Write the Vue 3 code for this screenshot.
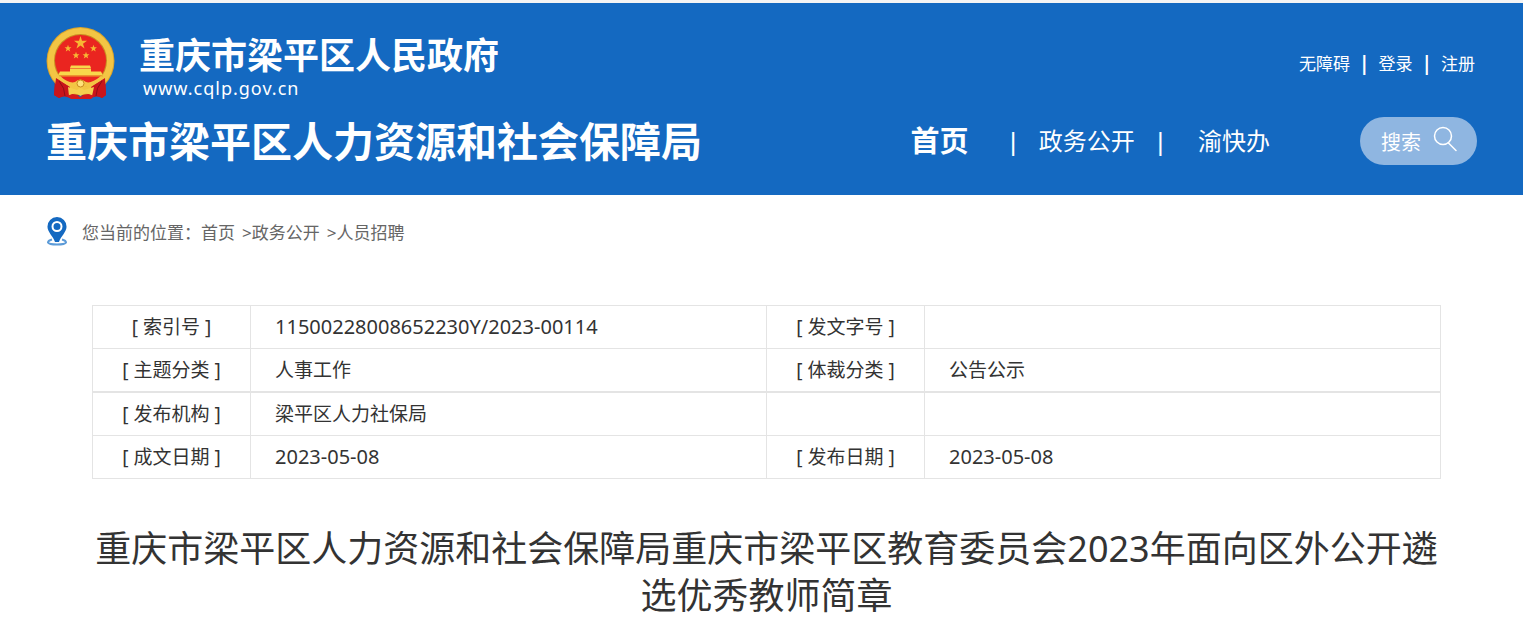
<script setup>
const userLinks = ['无障碍', '登录', '注册']

const crumbs = ['首页', '政务公开', '人员招聘']

const rows = [
  ['[ 索引号 ]', '11500228008652230Y/2023-00114', '[ 发文字号 ]', ''],
  ['[ 主题分类 ]', '人事工作', '[ 体裁分类 ]', '公告公示'],
  ['[ 发布机构 ]', '梁平区人力社保局', '', ''],
  ['[ 成文日期 ]', '2023-05-08', '[ 发布日期 ]', '2023-05-08'],
]

const isCode = (text) => /^\d/.test(text)
</script>

<template>
  <div class="page">
    <header class="header">
      <div class="brand-row">
        <a class="brand" href="#">
          <svg class="emblem" viewBox="7 7 69 73" aria-hidden="true">
            <path d="M16 58 L15 75 L20 78 Q25 75 31 78 L41 75 L52 78 Q58 75 63 78 L67 75 L66 58Z" fill="#c8141a" />
            <circle cx="41.500" cy="41" r="34" fill="#d9a32c" />
            <circle cx="41.500" cy="41" r="33" fill="#f3c544" />
            <circle cx="41.500" cy="40.500" r="26.500" fill="#c98b20" />
            <circle cx="41.500" cy="40.500" r="25.500" fill="#ea2520" />
            <path d="M41.500 16 L43 20.700 L48 20.700 L44 23.700 L45.500 28.400 L41.500 25.500 L37.500 28.400 L39 23.700 L35 20.700 L40 20.700Z" fill="#f7b733" />
            <path id="small-star" d="M29 24.800 l.9 2.500 h2.500 l-2 1.600 .8 2.500 -2.200-1.500 -2.200 1.500 .8-2.500 -2-1.600 h2.500z" fill="#f7b733" />
            <use href="#small-star" x="25.500" />
            <use href="#small-star" x="8" y="7" />
            <use href="#small-star" x="18" y="7" />
            <path d="M32 45.500 h19 l1 2.500 h-21z M31 48.500 h21 v3 h10 l2 4 h-45 l2-4 h10z" fill="#f8d74b" />
            <path d="M20 55.500 h44 v1 h-44z" fill="#e9a52a" />
            <path d="M17 58 Q24 62 31 67 L29 77 Q25 74 20 78 L15 75Z M66 58 Q59 62 52 67 L54 77 Q58 74 63 78 L67 75Z" fill="#c9151b" />
            <path d="M20 61 Q26 68 26 76 M63 61 Q57 68 57 76" fill="none" stroke="#8f0e18" stroke-width="1" />
            <path d="M18 58 Q30 68 38 67 L45 67 Q54 67 65 58 L62 56 Q52 64 47 62 Q41 57 36 62 Q30 64 21 56Z" fill="#f3c544" />
            <circle cx="41.500" cy="63.500" r="3.500" fill="#ffe27a" stroke="#c98b20" stroke-width="1" />
            <path d="M29 67 L38 70 Q41.500 66 45 70 L55 67 L53 76 Q47 71 41.500 76 Q36 71 30 76Z" fill="#f5cf4e" />
            <path d="M28 76 Q35 72 41 77 Q48 72 55 76 L52 79 H32Z" fill="#d3191c" />
          </svg>
          <span class="brand-text">
            <span class="gov-name">重庆市梁平区人民政府</span>
            <span class="gov-url">www.cqlp.gov.cn</span>
          </span>
        </a>
        <div class="user-links">
          <template v-for="(link, i) in userLinks" :key="link">
            <span v-if="i" class="bar">|</span>
            <a href="#">{{ link }}</a>
          </template>
        </div>
      </div>

      <div class="dept-row">
        <h1 class="dept-name">重庆市梁平区人力资源和社会保障局</h1>
        <div class="dept-tools">
          <nav class="nav">
            <a class="home" href="#">首页</a>
            <span class="bar">|</span>
            <a href="#">政务公开</a>
            <span class="bar">|</span>
            <a class="last" href="#">渝快办</a>
          </nav>
          <button class="search" type="button">
            搜索
            <svg viewBox="0 0 24 26" aria-hidden="true">
              <circle cx="10" cy="10" r="8.500" />
              <path d="M15.500 17 L23 24.500" />
            </svg>
          </button>
        </div>
      </div>
    </header>

    <nav class="crumbs">
      <svg class="pin" viewBox="0 0 22 29" aria-hidden="true">
        <path d="M6 22.500 Q2 23.500 2 25.500 Q3 27.500 11 27.500 Q19 27.500 20 25.500 Q20 23.500 16 22.500" fill="none" stroke="#5c9bd8" stroke-width="2" />
        <path d="M11 0 A9.500 9.500 0 0 1 20.500 10 C20.500 15 15 19 13 25 H9 C7 19 1.500 15 1.500 10 A9.500 9.500 0 0 1 11 0Z" fill="#1469c1" />
        <circle cx="11" cy="9.500" r="4.500" fill="none" stroke="#fff" stroke-width="2" />
      </svg>
      <span>您当前的位置：</span>
      <template v-for="(crumb, i) in crumbs" :key="crumb">
        <span v-if="i" class="arrow">&gt;</span>
        <a href="#">{{ crumb }}</a>
      </template>
    </nav>

    <main class="article">
      <table class="meta">
        <tbody>
          <tr v-for="(row, i) in rows" :key="i">
            <template v-for="(cell, j) in row" :key="j">
              <th v-if="j % 2 === 0" scope="row">{{ cell }}</th>
              <td v-else :class="{ code: isCode(cell) }">{{ cell }}</td>
            </template>
          </tr>
        </tbody>
      </table>
      <h2 class="title">重庆市梁平区人力资源和社会保障局重庆市梁平区教育委员会2023年面向区外公开遴选优秀教师简章</h2>
    </main>
  </div>
</template>

<style>
body {
  background: #fff;
}
</style>

<style scoped>
.page {
  border-top: 3px solid #f4f4f4;
  font-family: "Noto Sans", "Noto Sans CJK SC", sans-serif;
  color: #333;
}

a {
  color: inherit;
  text-decoration: none;
}

.header {
  padding: 24px 46px 30px;
  background: #1469c1;
  color: #fff;
}

.brand-row,
.dept-row {
  display: flex;
  justify-content: space-between;
  align-items: center;
}

.brand {
  display: flex;
  align-items: center;
  gap: 24px;
}

.emblem {
  width: 69px;
  height: 73px;
}

.brand-text {
  display: flex;
  flex-direction: column;
  padding-top: 8px;
}

.gov-name {
  font-size: 36px;
  font-weight: 700;
  line-height: 40px;
}

.gov-url {
  padding-left: 4px;
  font-size: 18px;
  line-height: 24px;
  letter-spacing: 1px;
}

.user-links {
  display: flex;
  align-items: center;
  gap: 9px;
  padding-right: 2px;
  font-size: 17px;
  line-height: 24px;
}

.user-links .bar {
  padding-bottom: 2px;
  font-size: 19px;
  font-weight: 700;
}

.dept-row {
  margin-top: 17px;
}

.dept-name {
  margin: 0;
  font-size: 41px;
  font-weight: 700;
  line-height: 48px;
}

.dept-tools,
.nav {
  display: flex;
  align-items: center;
}

.nav {
  gap: 19px;
  margin-right: 90px;
  font-size: 24px;
  line-height: 48px;
}

.nav .bar {
  font-weight: 500;
}

.home {
  margin-right: 19px;
  font-size: 29px;
  font-weight: 700;
}

.last {
  margin-left: 12px;
}

.search {
  display: flex;
  align-items: center;
  gap: 12px;
  height: 48px;
  padding: 0 20px 0 21px;
  border: 0;
  border-radius: 24px;
  background: #8fb6e1;
  color: #fff;
  font-family: inherit;
  font-size: 20px;
}

.search svg {
  width: 24px;
  height: 26px;
  margin-bottom: 4px;
  fill: none;
  stroke: #fff;
  stroke-width: 1.5;
  stroke-linecap: round;
}

.crumbs {
  display: flex;
  align-items: center;
  padding: 22px 46px 0;
  font-size: 17px;
  line-height: 32px;
  color: #666;
}

.pin {
  width: 22px;
  height: 29px;
  margin-right: 14px;
  margin-bottom: 3px;
}

.arrow {
  margin-left: 7px;
}

.article {
  padding: 56px 82px 20px 92px;
}

.meta {
  width: 100%;
  table-layout: fixed;
  border-collapse: collapse;
  font-size: 19px;
  line-height: 28px;
}

.meta th,
.meta td {
  height: 42px;
  padding: 0;
  border: 1px solid #e4e4e4;
}

.meta th {
  width: 157px;
  font-weight: 400;
  text-align: center;
}

.meta td {
  padding-left: 24px;
}

.meta .code {
  font-size: 20px;
}

.meta tr:nth-child(2) > * {
  border-bottom-width: 2px;
}

.title {
  margin: 46px 0 0;
  font-size: 36px;
  font-weight: 400;
  line-height: 47px;
  text-align: center;
  word-break: break-all;
}
</style>
